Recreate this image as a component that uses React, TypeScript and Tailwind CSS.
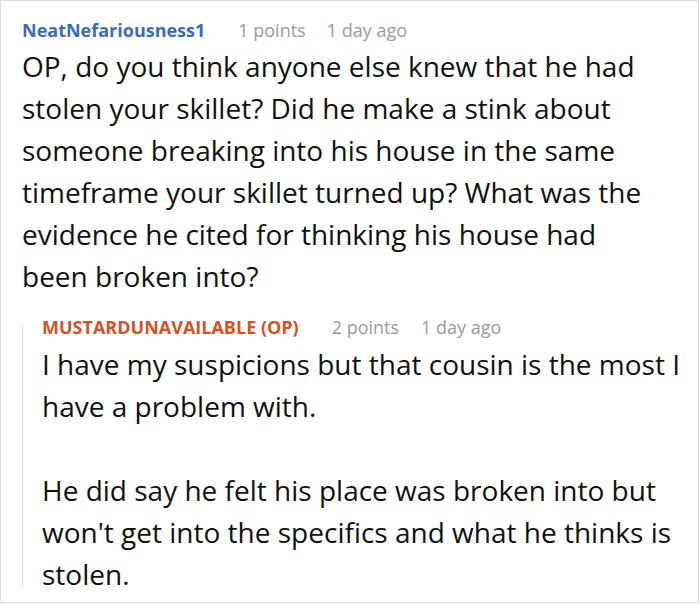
export default function App() {
  return (
    <div className="w-[700px] h-[604px] bg-white" style={{ fontFamily: '"Open Sans", sans-serif' }}>
      <div className="w-[699px] h-[603px] border border-[#dcdcdc] pl-[21px] pr-[6px] pt-[15px]">
        <div className="flex items-baseline text-[18px] leading-[28px]">
          <span className="font-bold text-[#3a6cbd]">NeatNefariousness1</span>
          <span className="ml-[33px] text-[#9a9a9a]">1 points</span>
          <span className="ml-[21px] text-[#9a9a9a]">1 day ago</span>
        </div>
        <p className="mt-[1px] pr-[30px] text-[28px] leading-[42px] text-[#111]">
          OP, do you think anyone else knew that he had stolen your skillet? Did he make a stink about someone breaking into his house in the same timeframe your skillet turned up? What was the evidence he cited for thinking his house had been broken into?
        </p>
        <div className="mt-[16px] flex">
          <div className="w-px bg-[#dddddd] mt-[13px] mb-[9px]" />
          <div className="pl-[19px] flex-1">
            <div className="flex items-baseline text-[18px] leading-[28px]">
              <span className="font-bold text-[#d5531f]">MUSTARDUNAVAILABLE (OP)</span>
              <span className="ml-[33px] text-[#9a9a9a]">2 points</span>
              <span className="ml-[22px] text-[#9a9a9a]">1 day ago</span>
            </div>
            <p className="mt-[2px] text-[28px] leading-[42px] text-[#111]">
              I have my suspicions but that cousin is the most I have a problem with.
            </p>
            <p className="mt-[42px] text-[28px] leading-[42px] text-[#111]">
              He did say he felt his place was broken into but won't get into the specifics and what he thinks is stolen.
            </p>
          </div>
        </div>
      </div>
    </div>
  );
}
